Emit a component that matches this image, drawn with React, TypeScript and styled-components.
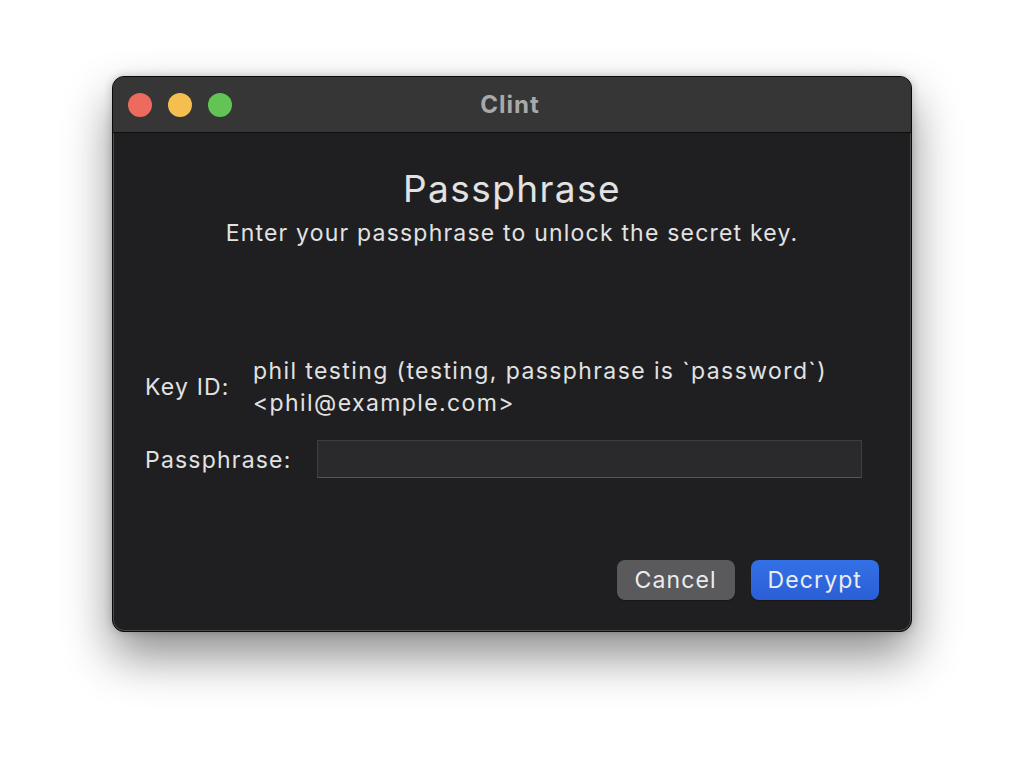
import React from 'react';
import styled, {createGlobalStyle} from "styled-components";

const GlobalStyle = createGlobalStyle`
  body {
    margin: 0;
    background: #ffffff;
    font-family: Inter, "Noto Sans", sans-serif;
  }
`

const Page = styled.div`
  width: 1024px;
  height: 780px;
  padding: 76px 0 0 112px;
  box-sizing: border-box;
`

const Window = styled.div`
  width: 800px;
  height: 556px;
  box-sizing: border-box;
  border-radius: 12px;
  background: #1f1f21;
  border: 1px solid #0a0a0a;
  box-shadow: inset 0 0 0 1px #4a4a4a, 0 24px 48px rgba(0, 0, 0, 0.45), 0 0 10px rgba(0, 0, 0, 0.2);
  overflow: hidden;
  display: flex;
  flex-direction: column;
`

const TitleBar = styled.div`
  height: 56px;
  flex-shrink: 0;
  background: #363636;
  border-bottom: 1px solid #0d0d0d;
  box-sizing: border-box;
  display: flex;
  align-items: center;
  padding-left: 15px;
  position: relative;
`

const Light = styled.div<{ color: string }>`
  width: 24px;
  height: 24px;
  border-radius: 50%;
  background: ${(props) => props.color};
  margin-right: 16px;
`

const Title = styled.div`
  position: absolute;
  left: 0;
  right: 4px;
  text-align: center;
  font-weight: 700;
  font-size: 24px;
  letter-spacing: 1px;
  color: #a9a9a9;
  pointer-events: none;
`

const Content = styled.div`
  flex: 1;
  display: flex;
  flex-direction: column;
  padding: 34px 32px 30px 32px;
  letter-spacing: 1.2px;
`

const Heading = styled.div`
  text-align: center;
  font-size: 37px;
  letter-spacing: 1.4px;
  color: #e2e2e2;
  line-height: 44px;
`

const Sub = styled.div`
  text-align: center;
  font-size: 23px;
  color: #e2e2e2;
  line-height: 28px;
  margin-top: 8px;
`

const Form = styled.div`
  margin-top: 108px;
  display: grid;
  grid-template-columns: 108px 1fr;
  row-gap: 22px;
  align-items: center;
`

const Label = styled.div`
  font-size: 23px;
  color: #e2e2e2;
`

const Value = styled.div`
  font-size: 23px;
  letter-spacing: 1.4px;
  color: #e2e2e2;
  line-height: 32px;
`

const PassRow = styled.div`
  grid-column: 1 / span 2;
  display: flex;
  align-items: center;

  ${Label} {
    width: 172px;
    flex-shrink: 0;
  }
`

const Input = styled.input`
  width: 545px;
  height: 38px;
  margin-top: -1px;
  box-sizing: border-box;
  background: #2a2a2c;
  border: 1px solid #3e3e40;
  border-bottom-color: #555557;
  outline: none;
  color: #e2e2e2;
  font-size: 20px;
`

const Buttons = styled.div`
  margin-top: auto;
  display: flex;
  justify-content: flex-end;
  gap: 16px;
  margin-bottom: 1px;
`

const Button = styled.button<{ primary?: boolean }>`
  height: 40px;
  padding: 0 ${(props) => (props.primary ? "17px" : "18px")};
  border: none;
  border-radius: 8px;
  font-family: inherit;
  font-size: 23px;
  letter-spacing: 1.1px;
  color: #ececec;
  background: ${(props) => (props.primary ? "linear-gradient(#3470e6, #2a5fd6)" : "#5a5a5c")};
  box-shadow: 0 1px 1px rgba(0, 0, 0, 0.3);
`

const App = () => {
  return (
    <Page>
      <GlobalStyle/>
      <Window>
        <TitleBar>
          <Light color="#ed6a5e"/>
          <Light color="#f5bf4f"/>
          <Light color="#61c454"/>
          <Title>Clint</Title>
        </TitleBar>
        <Content>
          <Heading>Passphrase</Heading>
          <Sub>Enter your passphrase to unlock the secret key.</Sub>
          <Form>
            <Label>Key ID:</Label>
            <Value>phil testing (testing, passphrase is `password`)<br/>&lt;phil@example.com&gt;</Value>
            <PassRow>
              <Label>Passphrase:</Label>
              <Input type="password"/>
            </PassRow>
          </Form>
          <Buttons>
            <Button>Cancel</Button>
            <Button primary>Decrypt</Button>
          </Buttons>
        </Content>
      </Window>
    </Page>
  );
};

export default App;
